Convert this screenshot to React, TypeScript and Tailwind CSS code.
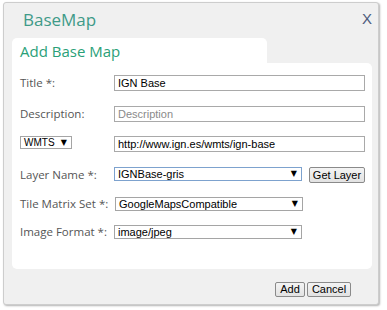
import React from "react";

const lbl = "w-[94px] shrink-0 text-[11.5px] text-[#555] font-['Open_Sans',sans-serif] leading-none";
const ctl = "font-['Liberation_Sans',Arial,sans-serif] text-[11px] leading-none text-black";

function Sel({ value, w, h, focus, small }: { value: string; w: string; h: string; focus?: boolean; small?: boolean }) {
  return (
    <div
      className={`${w} ${h} flex items-center justify-between bg-white border ${
        focus ? "border-[#7da2ce]" : "border-[#a5a5a5]"
      } pl-[3px] pr-[4px] font-['Liberation_Sans',Arial,sans-serif] leading-none text-black ${
        small ? "text-[10px]" : "text-[11px]"
      }`}
    >
      <span>{value}</span>
      <span className="text-[8px] font-['DejaVu_Sans',sans-serif]">▼</span>
    </div>
  );
}

function Inp({ value, placeholder }: { value?: string; placeholder?: string }) {
  return (
    <div className={`w-[251px] h-[16px] flex items-center bg-white border border-[#a9a9a9] pl-[3px] ${ctl}`}>
      {value ? <span>{value}</span> : <span className="text-[#8a8a8a]">{placeholder}</span>}
    </div>
  );
}

const btn =
  "h-[15px] flex items-center justify-center border border-[#8a8a8a] rounded-[2px] bg-gradient-to-b from-[#f4f4f4] to-[#e2e2e2] font-['Liberation_Sans',Arial,sans-serif] text-[11px] leading-none text-black";

export default function App() {
  return (
    <div className="w-[387px] h-[310px] bg-white pl-[3px] pt-[2px]">
      <div className="w-[376px] h-[303px] border border-[#cdcdcd] rounded-[3px] bg-[#f0f0f0] shadow-[1px_1px_2px_rgba(0,0,0,0.3)] flex flex-col">
        <div className="h-[35px] flex justify-between items-start">
          <div className="pl-[19px] pt-[5px] text-[17px] leading-[24px] text-[#3e9a88] font-['Open_Sans',sans-serif]">
            BaseMap
          </div>
          <div className="pr-[6px] pt-[6px] text-[15px] leading-[20px] text-[#4d5b7c] font-['Liberation_Sans',Arial,sans-serif]">
            X
          </div>
        </div>
        <div className="ml-[8px] w-[255px] h-[25px] bg-white rounded-t-[5px] pl-[8px] pt-[3px] text-[15px] leading-[20px] text-[#2a9f78] font-['Open_Sans',sans-serif]">
          Add Base Map
        </div>
        <div className="ml-[8px] w-[360px] h-[206px] bg-white rounded-b-[5px] rounded-tr-[5px] pl-[8px] pt-[12px] flex flex-col">
          <div className="flex items-center h-[16px]">
            <div className={lbl}>Title *:</div>
            <Inp value="IGN Base" />
          </div>
          <div className="flex items-center h-[16px] mt-[15px]">
            <div className={lbl}>Description:</div>
            <Inp placeholder="Description" />
          </div>
          <div className="flex items-start h-[16px] mt-[14px]">
            <div className="w-[94px] shrink-0">
              <Sel value="WMTS" w="w-[52px]" h="h-[13px]" small />
            </div>
            <Inp value="http://www.ign.es/wmts/ign-base" />
          </div>
          <div className="flex items-start h-[16px] mt-[15px]">
            <div className={`${lbl} self-center`}>Layer Name *:</div>
            <Sel value="IGNBase-gris" w="w-[188px]" h="h-[14px]" focus />
            <div className={`ml-[7px] w-[56px] !h-[16px] ${btn}`}>Get Layer</div>
          </div>
          <div className="flex items-center h-[14px] mt-[14px]">
            <div className={lbl}>Tile Matrix Set *:</div>
            <div className="ml-[1px]">
              <Sel value="GoogleMapsCompatible" w="w-[188px]" h="h-[14px]" />
            </div>
          </div>
          <div className="flex items-center h-[14px] mt-[14px]">
            <div className={lbl}>Image Format *:</div>
            <Sel value="image/jpeg" w="w-[188px]" h="h-[14px]" />
          </div>
        </div>
        <div className="flex justify-end gap-[2px] pr-[27px] mt-[13px]">
          <div className={`w-[30px] ${btn}`}>Add</div>
          <div className={`w-[44px] ${btn}`}>Cancel</div>
        </div>
      </div>
    </div>
  );
}
